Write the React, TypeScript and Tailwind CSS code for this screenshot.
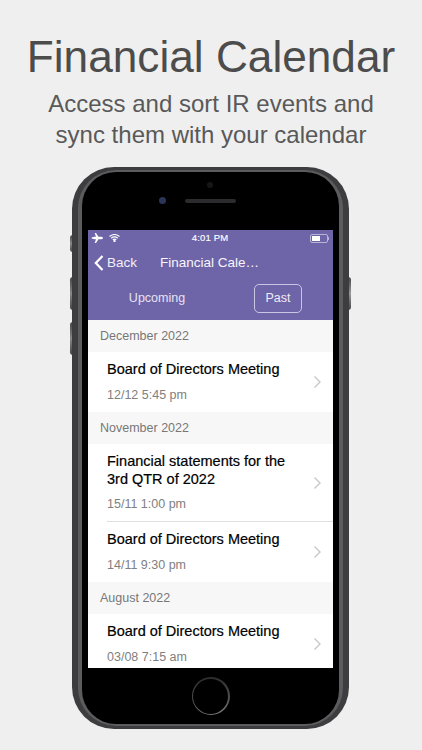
const font = { fontFamily: '"Liberation Sans", Arial, sans-serif' };

function Chevron() {
  return (
    <svg width="9" height="14" viewBox="0 0 9 14" fill="none" className="shrink-0">
      <path d="M1.5 1.5 7 7l-5.500 5.500" stroke="#c7c7cc" strokeWidth="1.400" />
    </svg>
  );
}

function Header({ children }: { children: string }) {
  return <div className="flex h-[32px] items-center bg-[#f7f7f7] pl-[12px] text-[12.500px] text-[#777777]">{children}</div>;
}

function Row({ title, date, h }: { title: React.ReactNode; date: string; h: string }) {
  return (
    <div className={`flex ${h} items-center bg-white pl-[19px] pr-[11px]`}>
      <div className="flex min-w-0 flex-1 flex-col">
        <div className="text-[14.500px] leading-[17.500px] text-black [-webkit-text-stroke:0.2px_black]">{title}</div>
        <div className="mt-[9px] text-[12.500px] leading-[15px] text-[#808080]">{date}</div>
      </div>
      <Chevron />
    </div>
  );
}

export default function App() {
  return (
    <div style={font} className="flex h-[750px] w-[422px] flex-col items-center overflow-hidden bg-[#efefef]">
      <h1 className="mt-[31px] text-[44.200px] font-normal leading-[52px] text-[#4c4c4c]">Financial Calendar</h1>
      <p className="mt-[5px] text-center text-[24px] leading-[31px] text-[#595959]">
        Access and sort IR events and
        <br />
        sync them with your calendar
      </p>

      <div className="relative ml-[72px] mt-[17px] w-[277px] self-start">
        <div className="absolute left-[-2px] top-[68px] h-[17px] w-[3px] rounded-l-sm bg-gradient-to-b from-[#444444] via-[#888888] to-[#444444]" />
        <div className="absolute left-[-2px] top-[110px] h-[33px] w-[3px] rounded-l-sm bg-gradient-to-b from-[#444444] via-[#888888] to-[#444444]" />
        <div className="absolute left-[-2px] top-[155px] h-[33px] w-[3px] rounded-l-sm bg-gradient-to-b from-[#444444] via-[#888888] to-[#444444]" />
        <div className="absolute right-[-2px] top-[110px] h-[33px] w-[3px] rounded-r-sm bg-gradient-to-b from-[#444444] via-[#999999] to-[#444444]" />

        <div className="relative h-[562px] rounded-[42px] bg-[#3d3d3f] px-[6px] py-[3px]">
          <div className="h-full rounded-[38px] bg-[#5c5c5e] px-[4px] py-[2px]">
            <div className="flex h-full flex-col rounded-[34px] bg-black">
              <div className="relative h-[58px] shrink-0">
                <div className="absolute left-[125px] top-[10px] h-[6px] w-[6px] rounded-full bg-[#161618]" />
                <div className="absolute left-[77px] top-[25px] h-[7px] w-[7px] rounded-full bg-[#2c3558]" />
                <div className="absolute left-[103px] top-[27px] h-[4px] w-[51px] rounded-full bg-[#2b2b2d]" />
              </div>

              <div className="ml-[6px] mr-[6px] flex h-[438px] shrink-0 flex-col overflow-hidden bg-white">
                <div className="shrink-0 bg-[#6e64a8] text-white">
                  <div className="grid h-[16px] grid-cols-[1fr_auto_1fr] items-center pl-[3px] pr-[4px]">
                    <div className="flex items-center gap-[6px]">
                      <svg width="12" height="10" viewBox="0 0 12 10" fill="white">
                        <path d="M0.500 4.200 2 4.200 3 3.800 5 3.800 3.700 0 5 0 7.500 3.800 10.500 3.800Q12 4 12 5T10.500 6.200L7.500 6.200 5 10 3.700 10 5 6.200 3 6.200 2 5.800 0.500 5.800 1 5Z" />
                      </svg>
                      <svg width="11" height="8" viewBox="0 0 11 8" fill="none" stroke="white" strokeWidth="1.100">
                        <path d="M0.500 2.500Q5.500-1.500 10.500 2.500M2.200 4.200Q5.500 1.500 8.800 4.200M3.800 5.800Q5.500 4.500 7.200 5.800" />
                        <circle cx="5.500" cy="7" r="0.600" fill="white" />
                      </svg>
                    </div>
                    <span className="text-[9.500px] tracking-[0.15px] [-webkit-text-stroke:0.15px_white]">4:01 PM</span>
                    <div className="flex items-center justify-end">
                      <div className="flex h-[9px] w-[18px] items-center rounded-[2px] border border-[#b9b4d6] p-[1px]">
                        <div className="h-full w-[8px] bg-white" />
                      </div>
                      <div className="h-[3px] w-[1px] bg-[#b9b4d6]" />
                    </div>
                  </div>

                  <div className="flex h-[34px] items-center pl-[6px]">
                    <svg width="10" height="16" viewBox="0 0 10 16" fill="none" stroke="white" strokeWidth="2.200">
                      <path d="M8.500 1 1.800 8l6.700 7" />
                    </svg>
                    <span className="ml-[3px] text-[13.500px] text-[#f2f1f8]">Back</span>
                    <span className="ml-[23px] text-[13.500px] text-[#f7f6fb]">Financial Cale…</span>
                  </div>

                  <div className="mt-[4px] flex h-[36px] items-start">
                    <div className="flex h-[29px] w-[138px] items-center justify-center text-[12.500px] text-[#e6e3f2]">Upcoming</div>
                    <div className="ml-[28px] flex h-[29px] w-[48px] items-center justify-center rounded-[5px] border border-[#c9c5e2] text-[12.500px] text-[#eeecf6]">Past</div>
                  </div>
                </div>

                <div className="flex flex-col">
                  <Header>December 2022</Header>
                  <Row title="Board of Directors Meeting" date="12/12 5:45 pm" h="h-[60px]" />
                  <Header>November 2022</Header>
                  <Row
                    title={
                      <>
                        Financial statements for the
                        <br />
                        3rd QTR of 2022
                      </>
                    }
                    date="15/11 1:00 pm"
                    h="h-[77px]"
                  />
                  <div className="ml-[19px] h-px shrink-0 bg-[#e0e0e0]" />
                  <Row title="Board of Directors Meeting" date="14/11 9:30 pm" h="h-[60px]" />
                  <Header>August 2022</Header>
                  <Row title="Board of Directors Meeting" date="03/08 7:15 am" h="h-[60px]" />
                </div>
              </div>

              <div className="flex flex-1 items-center justify-center">
                <div className="h-[38px] w-[38px] rounded-full bg-gradient-to-b from-[#2a2a2c] to-[#777779] p-[1.500px]">
                  <div className="h-full w-full rounded-full bg-black" />
                </div>
              </div>
            </div>
          </div>
        </div>
      </div>
    </div>
  );
}
